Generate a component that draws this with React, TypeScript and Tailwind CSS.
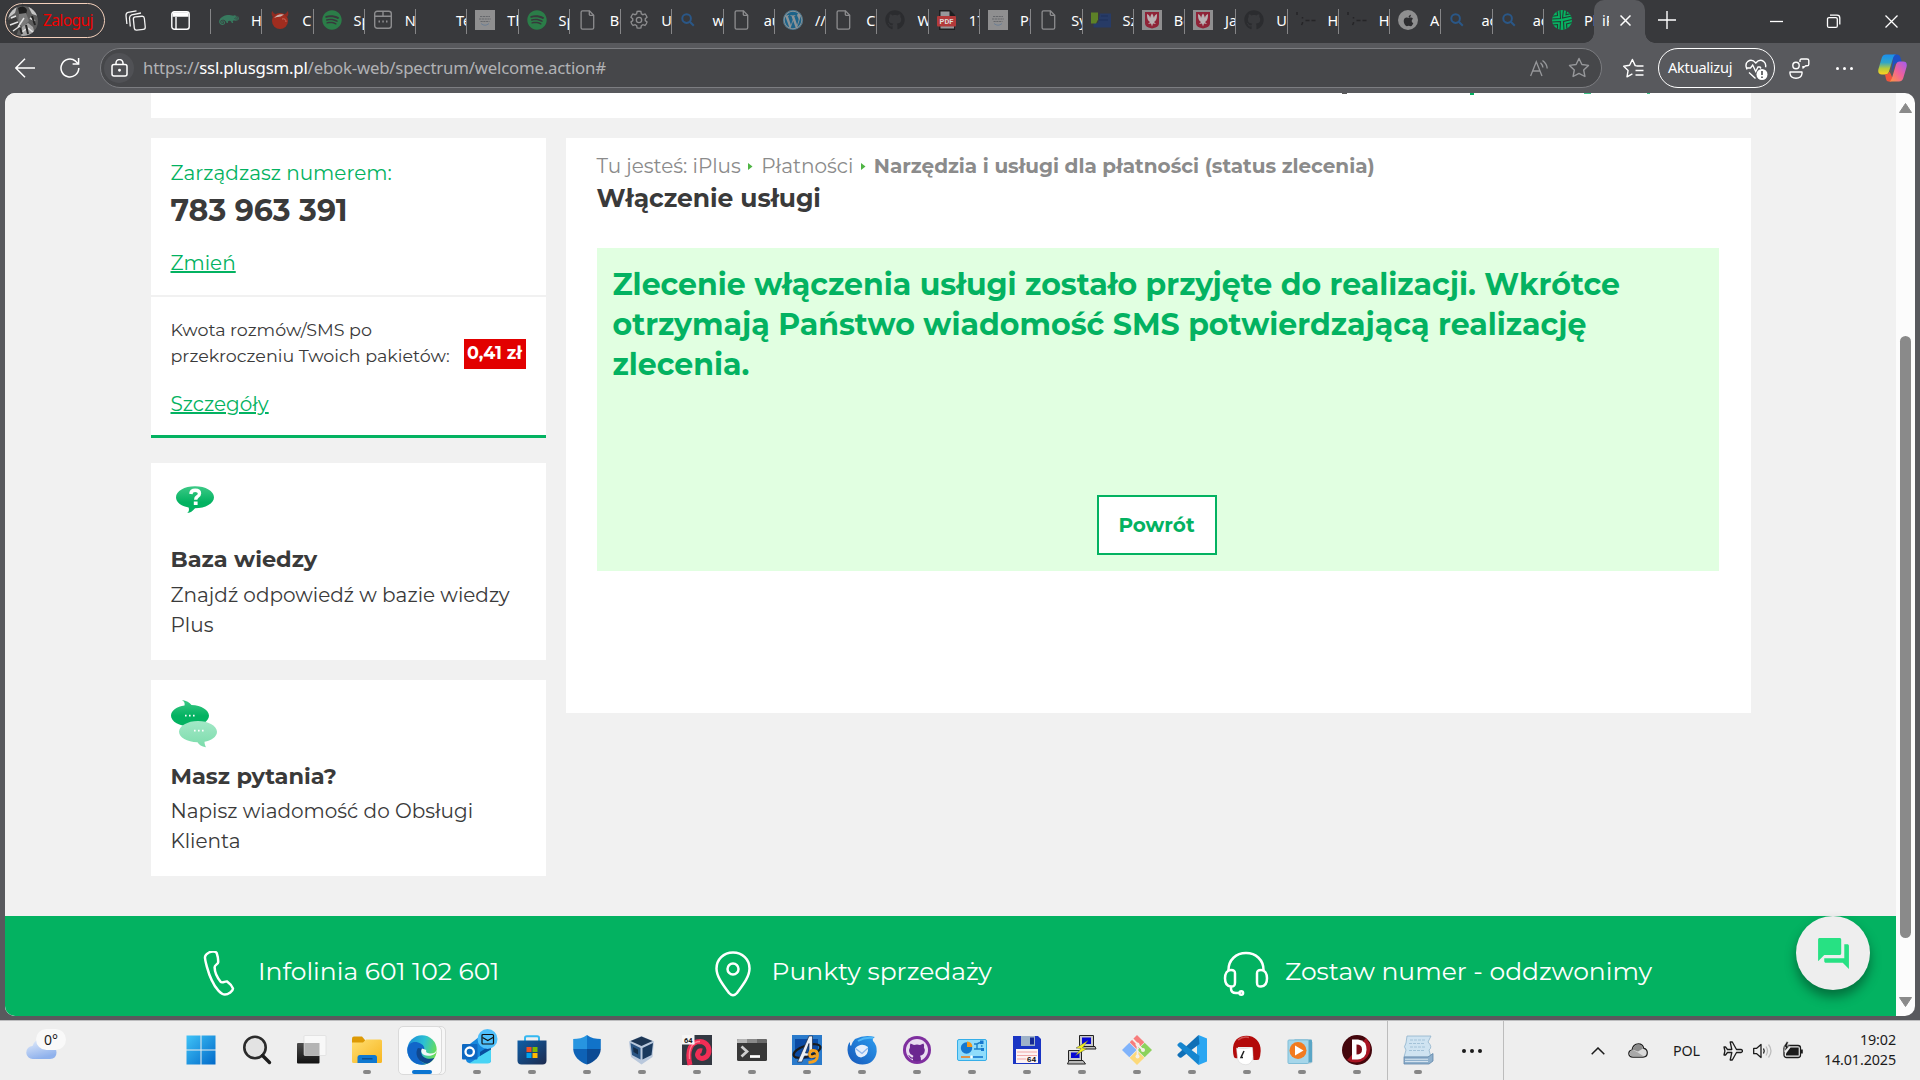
import type { ReactNode } from "react";
import { FaSpotify, FaWordpress, FaGithub, FaApple, FaSuse } from "react-icons/fa";
import { MdForum } from "react-icons/md";

/* ---------- tab icons ---------- */

const FileIcon = () => (
  <svg width="20" height="20" viewBox="0 0 20 20" fill="none" stroke="#8d8d8f" strokeWidth="1.3">
    <path d="M4.5 .8h7l4.2 4.400v12.600a1.400 1.400 0 0 1-1.400 1.400H4.500a1.400 1.400 0 0 1-1.400-1.400V2.200A1.400 1.400 0 0 1 4.500 .8z" />
    <path d="M11.300 .8v3.400a1.200 1.200 0 0 0 1.200 1.200h3.200" />
  </svg>
);

const SearchTabIcon = () => (
  <svg width="20" height="20" viewBox="0 0 20 20" fill="none" stroke="#2a5787" strokeWidth="2">
    <circle cx="6.600" cy="8.600" r="4.300" />
    <path d="m9.800 11.800 4 4" />
  </svg>
);

const WefIcon = () => (
  <svg width="20" height="20" viewBox="0 0 20 20">
    <rect width="20" height="20" fill="#8f8f90" />
    <path d="M5 6.500h10M4 9h12M5.500 11.500h9" stroke="#66686c" strokeWidth="1.200" strokeDasharray="2.200 .6" />
    <path d="M6 13.500q4 3.500 8 0" stroke="#6d7f94" fill="none" />
  </svg>
);

const PolandIcon = () => (
  <svg width="20" height="20" viewBox="0 0 20 20">
    <rect width="20" height="20" fill="#8f8f90" />
    <path d="M3 2h14v11q0 3-3.500 4.500L10 18.500l-3.500-1Q3 16 3 13z" fill="#8f2337" />
    <path d="M5 4c0 5 1 7 3 8l-2 2 3-.5 1 3 1-3 3 .5-2-2c2-1 3-3 3-8-2 1-3 2-3 4L11 5l-1-1.500L9 5l-1 3c0-2-1-3-3-4z" fill="#b9b1b3" />
  </svg>
);

const GearIcon = () => (
  <svg width="20" height="20" viewBox="0 0 24 24" fill="none" stroke="#8d8d8f" strokeWidth="1.600">
    <path d="M12 1.500c.8 0 1.600.1 2.300.3l.5 2.700 1.900 1.100 2.600-.9a10.500 10.500 0 0 1 2.300 4l-2.100 1.800v2.200l2.100 1.800a10.500 10.500 0 0 1-2.300 4l-2.600-.9-1.900 1.100-.5 2.700a10.500 10.500 0 0 1-4.600 0l-.5-2.700-1.900-1.100-2.600.9a10.500 10.500 0 0 1-2.300-4l2.100-1.800v-2.200L2.400 8.700a10.500 10.500 0 0 1 2.300-4l2.600.9 1.900-1.100.5-2.700c.7-.2 1.500-.3 2.300-.3z" />
    <circle cx="12" cy="12" r="3.200" />
  </svg>
);

const WindowTabIcon = () => (
  <svg width="20" height="20" viewBox="0 0 20 20" fill="none" stroke="#8d8d8f" strokeWidth="1.400">
    <rect x="1.700" y="1.200" width="16.600" height="17" rx="2.500" />
    <path d="M2 6.200h8V1.500M10 6.200h8" />
    <path d="M5.500 11.500h1.500M9.300 11.500h1.500M13 11.500h1.500" strokeWidth="1.800" />
  </svg>
);

const DevilIcon = () => (
  <svg width="20" height="20" viewBox="0 0 20 20">
    <circle cx="10" cy="11" r="8" fill="#a02d1f" />
    <path d="M3 7C1 5 1.500 2 2.500 1c.5 2 2 3 4 3.500zM17 7c2-2 1.500-5 .5-6-.5 2-2 3-4 3.500z" fill="#8e2b22" />
    <path d="M4 8q4-5 10-3.500-4 3-7 2.500z" fill="#c9b3ae" />
    <path d="M12 9q4-1 4 3" stroke="#c9685a" fill="none" />
  </svg>
);

const PdfIcon = () => (
  <svg width="20" height="20" viewBox="0 0 20 20">
    <path d="M2 0h11l5 5v15H2z" fill="#1f1f20" />
    <path d="M3.500 1.500h9V6H17v12.500H3.500z" fill="#97979a" />
    <rect y="6" width="19" height="10.500" rx="1" fill="#b33a3a" />
    <text x="9.500" y="14" fontSize="7.500" fontWeight="700" textAnchor="middle" fill="#ddd" fontFamily="Roboto, sans-serif">PDF</text>
  </svg>
);

const BlocksIcon = () => (
  <svg width="20" height="20" viewBox="0 0 20 20">
    <path d="M9 3.500h11v14H2.500V13H7z" fill="#273b66" />
    <path d="M0 2.500h7v7l-2 4H0z" fill="#5d8127" />
    <path d="M10 6h7M8 10h9" stroke="#1f3058" />
  </svg>
);

const PwnedIcon = () => (
  <svg width="20" height="20" viewBox="0 0 20 20" fill="none" stroke="#252527" strokeWidth="1.500">
    <path d="M1 2v3M6.500 7v1.500M6.500 12v1l-1 2M9.500 10.500h4M15.500 10.500h4" />
  </svg>
);

const PlusLogo = () => (
  <svg width="20" height="20" viewBox="0 0 20 20">
    <clipPath id="plusClip"><circle cx="10" cy="10" r="10" /></clipPath>
    <g clipPath="url(#plusClip)">
      <rect width="20" height="20" fill="#07b362" />
      <g stroke="#253a33" strokeWidth="1.100" fill="none">
        <path d="m8 0 .5 8.500L0 9M5 0l.5 5.500L0 6.300M11.500 0l-1 8L20 6M14.500 1 14 4.800l5-1.300M0 12l8.500-.5L8 20M0 15l5.500-.5V19M20 9.500l-8.500 2 .5 8.500M20 12.500l-5.500 1.500.5 6" />
      </g>
    </g>
  </svg>
);

type Tab = { icon?: ReactNode; text: string };

const file = <FileIcon />;
const spotify = <FaSpotify size={20} color="#2b7d48" />;
const github = <FaGithub size={20} color="#2b2c2f" />;

const tabs: Tab[] = [
  { icon: <FaSuse size={20} color="#37795e" />, text: "H" },
  { icon: <DevilIcon />, text: "C" },
  { icon: spotify, text: "Sp" },
  { icon: <WindowTabIcon />, text: "N" },
  { text: "Te" },
  { icon: <WefIcon />, text: "Th" },
  { icon: spotify, text: "Sp" },
  { icon: file, text: "Be" },
  { icon: <GearIcon />, text: "U" },
  { icon: <SearchTabIcon />, text: "w" },
  { icon: file, text: "au" },
  { icon: <span className="size-5 rounded-full bg-[#8d9396]"><FaWordpress size={20} color="#1d6389" /></span>, text: "//" },
  { icon: file, text: "C" },
  { icon: github, text: "W" },
  { icon: <PdfIcon />, text: "17" },
  { icon: <WefIcon />, text: "Pr" },
  { icon: file, text: "Sy" },
  { icon: <BlocksIcon />, text: "Sz" },
  { icon: <PolandIcon />, text: "Be" },
  { icon: <PolandIcon />, text: "Ja" },
  { icon: github, text: "U" },
  { icon: <PwnedIcon />, text: "H" },
  { icon: <PwnedIcon />, text: "H" },
  {
    icon: (
      <span className="flex size-5 items-center justify-center rounded-full bg-[#8f8f90]">
        <FaApple size={13} color="#2d2d30" />
      </span>
    ),
    text: "A",
  },
  { icon: <SearchTabIcon />, text: "ac" },
  { icon: <SearchTabIcon />, text: "ac" },
  { icon: <PlusLogo />, text: "Pl" },
];

/* ---------- browser chrome ---------- */

function TabStrip() {
  return (
    <div className="flex h-[43px] bg-[#38393c] text-white">
      <div className="mt-[3px] ml-[5px] flex h-[35px] w-[100px] shrink-0 items-center rounded-full border-[1.5px] border-[#f3d0bb] pl-[2px]">
        <svg width="30" height="30" viewBox="0 0 30 30">
          <clipPath id="avatar"><circle cx="15" cy="15" r="15" /></clipPath>
          <g clipPath="url(#avatar)">
            <rect width="30" height="30" fill="#5c5c5c" />
            <path d="M0 0h9l-2 7-7 5zM20 0h10v10l-6-2z" fill="#c4c4c4" />
            <path d="M10 2q6-4 9 2l-1 5-6 2z" fill="#1f1f1f" />
            <path d="M11 8l7-1 3 8-6 6-5-4z" fill="#7a7a7a" />
            <path d="M0 14l8-3 4 9-4 10H0z" fill="#3a3a3a" />
            <path d="M14 21l6-4 5 4 3 11H13z" fill="#a5a5a5" />
            <path d="M2 19l8-3M5 25l7-5M16 12l-6 9M20 22l6 5M22 12l5 3M3 12l5-2M14 26l4-3" stroke="#e2e2e2" strokeWidth="1.500" />
            <path d="M18 19l2 9M24 10l3 9M12 22l2 6" stroke="#252525" strokeWidth="2" />
          </g>
        </svg>
        <span className="ml-[5px] font-['Noto_Sans',sans-serif] text-[15.5px] tracking-[-0.6px] text-[#f20000]">Zaloguj</span>
      </div>
      <svg className="mt-[10px] ml-[20px] shrink-0" width="22" height="22" viewBox="0 0 22 22" fill="none" stroke="#f3f3f3" strokeWidth="1.300">
        <rect x="8.800" y="6.600" width="11" height="13.200" rx="2.200" transform="rotate(-6 14 13)" />
        <path d="M5.300 16.500 4.500 8q0-2.500 2.200-3.200L16 3M1.900 14 1 5.500Q.9 3 3.100 2.400L11.500.9" />
      </svg>
      <svg className="mt-[11px] ml-[24px] shrink-0" width="19" height="19" viewBox="0 0 19 19" fill="none" stroke="#fff" strokeWidth="1.400">
        <rect x=".8" y=".8" width="17.400" height="17.400" rx="2.500" />
        <path d="M1.500 3.500h16" strokeWidth="4.500" />
        <path d="M5 6v12" />
      </svg>
      <div className="ml-[20px] flex w-[1384px] shrink-0">
        {tabs.map((t, i) => (
          <div key={i} className="relative flex min-w-0 flex-1 overflow-hidden pt-[10px] pl-[9px]">
            <span className="absolute top-[9px] left-0 h-[25px] w-px bg-[#858587]" />
            <span className="flex size-5 shrink-0">{t.icon}</span>
            <span className="ml-[12px] font-['Noto_Sans',sans-serif] text-[14.500px] leading-[20px] whitespace-nowrap">{t.text}</span>
          </div>
        ))}
      </div>
      <div className="relative flex h-[43px] w-[51px] shrink-0 rounded-t-[10px] bg-[#58595d] pt-[10px] pl-[8px]">
        <span className="absolute bottom-0 -left-[10px] size-[10px] bg-[radial-gradient(circle_at_0_0,#38393c_9.5px,#58595d_10px)]" />
        <span className="absolute -right-[10px] bottom-0 size-[10px] bg-[radial-gradient(circle_at_100%_0,#38393c_9.5px,#58595d_10px)]" />
        <span className="w-[7px] overflow-hidden font-['Noto_Sans',sans-serif] text-[14.500px] leading-[20px]">iP</span>
        <svg className="mt-[5px] ml-[11px]" width="11" height="11" viewBox="0 0 11 11" stroke="#fff" strokeWidth="1.500">
          <path d="m.5.5 10 10M10.500.5l-10 10" />
        </svg>
      </div>
      <svg className="mt-[11px] ml-[13px] shrink-0" width="18" height="18" viewBox="0 0 18 18" stroke="#fff" strokeWidth="1.400">
        <path d="M9 0v18M0 9h18" />
      </svg>
      <svg className="mt-[14px] ml-[94px] shrink-0" width="130" height="15" viewBox="0 0 130 15" fill="none" stroke="#fff" strokeWidth="1.300">
        <path d="M0 7.500h13" />
        <rect x="57.500" y="3.600" width="9.800" height="9.800" rx="1.500" />
        <path d="M60 1.200h7q2.800 0 2.800 2.800v6.600" />
        <path d="m115.500 1.500 12 12M127.500 1.500l-12 12" />
      </svg>
    </div>
  );
}

function Toolbar() {
  return (
    <div className="flex h-[50px] items-center bg-[#58595d] text-white">
      <svg className="ml-[15px] shrink-0" width="20" height="20" viewBox="0 0 20 20" fill="none" stroke="#fff" strokeWidth="1.500">
        <path d="M20 10H1M10 .8.8 10l9.200 9.200" />
      </svg>
      <svg className="ml-[25px] shrink-0" width="20" height="20" viewBox="0 0 20 20" fill="none" stroke="#fff" strokeWidth="1.500">
        <path d="M18.800 10A8.900 8.900 0 1 1 15.600 3.200L18.500 6" />
        <path d="M18.600 0v6h-6" />
      </svg>
      <div className="ml-[20px] flex h-[40px] w-[1502px] items-center rounded-full border-[1.5px] border-[#7c7d81] bg-[#46474a] pl-[3px]">
        <span className="flex size-[30px] shrink-0 items-center justify-center rounded-full bg-[#505155]">
          <svg width="17" height="18" viewBox="0 0 17 18" fill="none" stroke="#fff" strokeWidth="1.500">
            <rect x="1" y="5.500" width="15" height="11.500" rx="2" />
            <path d="M5 5.500V4a3.500 3.500 0 0 1 7 0v1.500" />
            <circle cx="8.500" cy="11.200" r=".7" fill="#fff" />
          </svg>
        </span>
        <span className="ml-[9px] pb-px font-['Noto_Sans',sans-serif] text-[16.800px] tracking-[-0.2px] whitespace-nowrap text-[#b1b2b5]">
          https://<span className="text-white">ssl.plusgsm.pl</span>/ebok-web/spectrum/welcome.action#
        </span>
        <svg className="ml-auto shrink-0" width="19" height="18" viewBox="0 0 19 18" fill="none" stroke="#97989b" strokeWidth="1.300">
          <path d="M.6 17 6.300 2.800 12 17M2.700 12h7.300" />
          <path d="M10.500 3.800q2 1.800 2.400 4.700M12.500 1.500q4.500 3.300 4.700 8" />
        </svg>
        <svg className="mr-[11px] ml-[19px] shrink-0" width="22" height="22" viewBox="0 0 22 22" fill="none" stroke="#97989b" strokeWidth="1.400" strokeLinejoin="round">
          <path d="m11 1.500 2.900 6 6.600.9-4.800 4.600 1.200 6.500L11 16.400l-5.900 3.100L6.300 13 1.500 8.400l6.600-.9z" />
        </svg>
      </div>
      <svg className="ml-[21px] shrink-0" width="22" height="21" viewBox="0 0 22 21" fill="none" stroke="#fff" strokeWidth="1.400" strokeLinejoin="round">
        <path d="M20.500 8h-6l-2.300-.4L9.400 1.500 6.600 7.300l-5.900.9 4.400 4.200L4 18.800l5.400-3" />
        <path d="M12.500 12.500h8M12.500 17h8" />
      </svg>
      <div className="ml-[13px] flex h-[40px] w-[117px] shrink-0 items-center rounded-full border-[1.5px] border-white pl-[9px]">
        <span className="pb-px font-['Noto_Sans',sans-serif] text-[14.600px] tracking-[-0.25px]">Aktualizuj</span>
        <svg className="mt-[3px] mr-[6px] ml-auto" width="23" height="22" viewBox="0 0 23 22" fill="none" stroke="#fff" strokeWidth="1.400">
          <path d="M2 10.500Q-.5 5 3 2.300 7-.3 10.800 4 14.500-.3 18.500 2.300q3 2.500 2 6M4 13.500l6.500 6" />
          <path d="M1 9h4.500l2.200-3 3 6.500L13 8h2l1 1.500" />
          <circle cx="17" cy="15.500" r="5.500" fill="#fff" stroke="none" />
          <path d="M17 12v4M17 17.500v1.500" stroke="#3f4044" strokeWidth="1.500" />
        </svg>
      </div>
      <svg className="ml-[14px] shrink-0" width="21" height="21" viewBox="0 0 21 21" fill="none" stroke="#fff" strokeWidth="1.400">
        <circle cx="7" cy="7.500" r="3.200" />
        <path d="M1 14h12v1.500q-.5 4.700-6 4.700t-6-4.700z" strokeLinejoin="round" />
        <path d="M11 4V2.500q0-1.500 1.500-1.500H18q1.800 0 1.800 1.500v3.700q0 1.600-1.800 1.600h-1.300L14 10V8" strokeLinejoin="round" />
      </svg>
      <span className="ml-[26px] flex gap-[4px]">
        <i className="size-[3px] rounded-full bg-white" />
        <i className="size-[3px] rounded-full bg-white" />
        <i className="size-[3px] rounded-full bg-white" />
      </span>
      <svg className="ml-[25px] shrink-0" width="29" height="28" viewBox="0 0 29 28">
        <defs>
          <linearGradient id="copA" x1="0" y1="0" x2="0" y2="1"><stop offset="0" stopColor="#1a8fee" /><stop offset=".4" stopColor="#2fa5c9" /><stop offset=".7" stopColor="#b6cb3b" /><stop offset="1" stopColor="#ffd21f" /></linearGradient>
          <linearGradient id="copB" x1="1" y1="0" x2="0" y2="1"><stop offset="0" stopColor="#a05cf2" /><stop offset=".5" stopColor="#f0619a" /><stop offset="1" stopColor="#ff9a3c" /></linearGradient>
        </defs>
        <path d="M15 .5h4.500q2 0 2.800 2.500l1.700 6h-5q-2 0-2.800 2L14 18" fill="#1d50c4" />
        <path d="M8 .5h10q-2 .5-2.800 3L11 17.500q-1 3-3.500 3H4Q-1 20.500.6 14.500L3.800 3.800Q5 .5 8 .5z" fill="url(#copA)" />
        <path d="M7 20.500q3.500 0 4.500-3l1.500 3 2 5-2 2h-2.500Q8.500 27.500 8 25z" fill="#f0553c" />
        <path d="M21 27.500H11q2-.5 2.800-3L18 10.500q1-3 3.500-3H25q5 0 3.400 6l-3.200 10.700Q24 27.500 21 27.500z" fill="url(#copB)" />
      </svg>
    </div>
  );
}

/* ---------- page content ---------- */

const Link = ({ children }: { children: string }) => (
  <a className="text-[#03b261] underline decoration-2 underline-offset-[1px]">{children}</a>
);

function InfoCard({ icon, title, text, gap, textGap }: { icon: ReactNode; title: string; text: ReactNode; gap: string; textGap: string }) {
  return (
    <section className={"w-[395px] bg-white px-5 pt-5 pb-5 " + gap}>
      <div className="h-12">{icon}</div>
      <h2 className="mt-[13px] text-[22.500px] leading-[30px] font-bold text-[#3a3a3a]">{title}</h2>
      <p className={"text-[20px] leading-[30px] text-[#3a3a3a] " + textGap}>{text}</p>
    </section>
  );
}

function Sidebar() {
  return (
    <aside className="w-[395px]">
      <section className="border-b-[3px] border-[#03b261] bg-white">
        <div className="border-b-2 border-[#f1f1f1] px-5 pt-5 pb-[17px] text-[20px]">
          <p className="leading-[30px] text-[#03b261]">Zarządzasz numerem:</p>
          <p className="mt-px text-[30px] leading-[44px] font-bold text-[#3a3a3a]">783 963 391</p>
          <p className="mt-[15px] leading-[30px]"><Link>Zmień</Link></p>
        </div>
        <div className="px-5 pt-5 pb-4 text-[20px]">
          <div className="flex items-end justify-between text-[17.500px] leading-[26px] text-[#3a3a3a]">
            <p>Kwota rozmów/SMS po<br />przekroczeniu Twoich pakietów:</p>
            <span className="h-[30px] w-[62px] bg-[#e20000] text-center leading-[27px] font-bold whitespace-nowrap text-white">0,41 zł</span>
          </div>
          <p className="mt-5 leading-[30px]"><Link>Szczegóły</Link></p>
        </div>
      </section>
      <InfoCard
        gap="mt-[25px]"
        textGap="mt-[6px]"
        title="Baza wiedzy"
        text={<>Znajdź odpowiedź w bazie wiedzy<br />Plus</>}
        icon={
          <svg width="48" height="48" viewBox="0 0 48 48">
            <defs><linearGradient id="bubble" x1="0" y1="0" x2="0" y2="1"><stop offset="0" stopColor="#3cc986" /><stop offset=".6" stopColor="#03b261" /></linearGradient></defs>
            <path d="M24 3.300c10.500 0 19 4.900 19 10.900 0 6.100-8.500 11-19 11-2.300 2.600-3.800 4.200-7.800 4.800 1.900-1.300 2.100-3.500 1.400-5.500C10 23 5 19 5 14.200 5 8.200 13.500 3.300 24 3.300z" fill="url(#bubble)" />
            <path d="M19.800 11q.3-3.800 4.400-3.800 4.300 0 4.300 3.300 0 2-2.200 3.200-1.600 1-1.600 3" fill="none" stroke="#fff" strokeWidth="3.400" />
            <path d="M22.800 18.500h3.800v3.500h-3.800z" fill="#fff" />
          </svg>
        }
      />
      <InfoCard
        gap="mt-5"
        textGap="mt-[5px]"
        title="Masz pytania?"
        text={<>Napisz wiadomość do Obsługi<br />Klienta</>}
        icon={
          <svg width="48" height="48" viewBox="0 0 48 48">
            <defs><linearGradient id="bubblePale" x1="0" y1="0" x2="0" y2="1"><stop offset="0" stopColor="#a3e8c7" /><stop offset="1" stopColor="#7bdcab" /></linearGradient></defs>
            <path d="M19 26.500C8.500 26.500 0 21.500 0 15.800 0 10.500 6 6.500 13.500 5.500 14 3.500 13.500 1.500 11 0c4.500.5 7.500 2.500 9.500 5C30.500 5.500 38 10 38 15.800c0 5.700-8.500 10.700-19 10.700z" fill="url(#bubble)" />
            <path d="M27 21c10.500 0 19 5 19 10.800 0 5.200-6 9-12.500 10 0 2 .5 3.700 1.500 5.500-4.500-.5-7-2.500-8.500-5C16 42 8 37.500 8 31.800 8 26 16.500 21 27 21z" fill="url(#bubblePale)" />
            <path d="M14 15.700h1.600M18 15.700h1.600M22 15.700h1.600M23 30.700h1.600M27 30.700h1.600M31 30.700h1.600" stroke="#fff" strokeWidth="1.700" />
          </svg>
        }
      />
    </aside>
  );
}

const Caret = () => (
  <svg className="mr-[8px] ml-[7.500px]" width="5" height="7" viewBox="0 0 5 7"><path d="M0 0 4.500 3.500 0 7z" fill="#4fb544" /></svg>
);

function Main() {
  return (
    <main className="h-[575px] w-[1185px] bg-white pt-[13px] pr-8 pl-[31px]">
      <nav className="flex items-center text-[20px] leading-[30px] tracking-[-0.02px] whitespace-nowrap text-[#8b8b8b]">
        <span>Tu jesteś: iPlus</span>
        <Caret />
        <span>Płatności</span>
        <Caret />
        <span className="font-bold">Narzędzia i usługi dla płatności (status zlecenia)</span>
      </nav>
      <h1 className="text-[25px] leading-[34px] font-bold tracking-[-0.05px] text-[#3a3a3a]">Włączenie usługi</h1>
      <div className="mt-[33px] h-[323px] bg-[#e1ffe1] px-4 pt-[17px] text-[#03b261]">
        <p className="text-[30px] leading-[40px] font-bold tracking-[-0.01px] whitespace-nowrap">
          Zlecenie włączenia usługi zostało przyjęte do realizacji. Wkrótce
          <br />
          otrzymają Państwo wiadomość SMS potwierdzającą realizację
          <br />
          zlecenia.
        </p>
        <button className="mt-[110px] ml-[484px] block h-[60px] w-[120px] border-2 border-[#03b261] bg-white text-[20px] font-bold">Powrót</button>
      </div>
    </main>
  );
}

const contacts: { label: string; icon: ReactNode }[] = [
  {
    label: "Infolinia 601 102 601",
    icon: (
      <path d="M14 1.500c3-1.500 7-1.200 7.800.8 1 3 1.600 6.500 1.300 9.300-.2 1.500-3.600 2.400-3.500 4.700.1 5 2.800 10.500 6 14.500 1.500 1.800 5-1 6.500-.3 2.700 2 5 4.500 5.800 6.800.7 2.500-5 6.300-8 6.300-3.500 0-9.500-6-13-14C13 22 9.800 8.500 10 6c.2-2 2-3.500 4-4.500z" />
    ),
  },
  {
    label: "Punkty sprzedaży",
    icon: (
      <>
        <path d="M24 1.500c9.500 0 16.500 7 16.500 16 0 8.500-7 17-12.500 24.500q-4 4.500-8 0C14.500 34.500 7.500 26 7.500 17.500c0-9 7-16 16.500-16z" />
        <circle cx="24" cy="18" r="5.500" />
      </>
    ),
  },
  {
    label: "Zostaw numer - oddzwonimy",
    icon: (
      <>
        <path d="M6.500 19.500V19C6.500 9 14 2 24 2s17.500 7 17.500 17v.5" />
        <path d="M9 19c3.500 0 4 1 4 3.500v9c0 3.500-1 4-4 4-4 0-6-3.500-6-8.200S5 19 9 19zM39 19c-3.500 0-4 1-4 3.500v9c0 3.500 1 4 4 4 4 0 6-3.500 6-8.200S43 19 39 19z" />
        <path d="M9 36v1.500q0 4.500 5 4.500h3" />
        <circle cx="19.300" cy="42" r="1.800" />
      </>
    ),
  },
];

function Footer() {
  return (
    <footer className="h-[100px] shrink-0 bg-[#03b261] pt-[35px] pl-[190px]">
      <div className="grid grid-cols-[513.5px_513.5px_1fr]">
        {contacts.map((c) => (
          <div key={c.label} className="flex">
            <svg width="48" height="48" viewBox="0 0 48 48" fill="none" stroke="#fff" strokeWidth="2.500">{c.icon}</svg>
            <span className="ml-[15px] text-[25px] leading-[40px] whitespace-nowrap text-white">{c.label}</span>
          </div>
        ))}
      </div>
    </footer>
  );
}

function Page() {
  return (
    <div className="flex h-[927px] bg-[#58595d] px-[5px] pb-[4px]">
      <div className="relative flex h-[923px] w-[1910px] overflow-hidden rounded-[10px] bg-[#fcfcfc] font-['Montserrat','Inter',sans-serif]">
        <div className="flex w-[1891px] flex-col bg-[#f1f1f1]">
          <div className="mx-auto flex h-[25px] w-[1600px] shrink-0 bg-white">
            <i className="ml-[1191px] h-px w-[5px] bg-[#5a5a5a]" />
            <i className="ml-[123px] h-[1.500px] w-[4px] bg-[#03b261]" />
            <i className="ml-[110px] h-px w-[7px] bg-[#3fc388]" />
            <i className="ml-[56px] h-px w-[3px] bg-[#3fc388]" />
          </div>
          <div className="mx-auto mt-5 flex w-[1600px] flex-1 items-start gap-5">
            <Sidebar />
            <Main />
          </div>
          <Footer />
        </div>
        <div className="flex w-[19px] flex-col items-center pt-[10px]">
          <svg width="13" height="10" viewBox="0 0 13 10"><path d="M6.500.5 12.500 9.500H.5z" fill="#8a8a8a" stroke="#8a8a8a" strokeLinejoin="round" /></svg>
          <div className="mt-[223px] h-[602px] w-[11px] rounded-full bg-[#8a8a8a]" />
          <svg className="mt-[59px]" width="13" height="10" viewBox="0 0 13 10"><path d="M6.500 9.500.5.5h12z" fill="#8a8a8a" stroke="#8a8a8a" strokeLinejoin="round" /></svg>
        </div>
        <button className="absolute top-[823px] left-[1791px] flex size-[74px] items-center justify-center rounded-full bg-[#eeeeee] shadow-[0_7px_12px_rgba(0,0,0,0.38)]">
          <MdForum size={37} color="#27e183" />
        </button>
      </div>
    </div>
  );
}

/* ---------- taskbar ---------- */

const apps: { name: string; icon: ReactNode; still?: boolean; active?: boolean }[] = [
  {
    name: "start", still: true,
    icon: <><path d="M-.5.5h14v14h-14zM14.500.5h14v14h-14zM-.5 15.500h14v14h-14zM14.500 15.500h14v14h-14z" fill="url(#win)" /></>,
  },
  {
    name: "search", still: true,
    icon: <><circle cx="13" cy="12.500" r="10.700" fill="#e3e3e3" stroke="#2b2b2b" strokeWidth="2.600" /><path d="m20.500 20.500 7 7" stroke="#1d1d1d" strokeWidth="3.400" strokeLinecap="round" /></>,
  },
  {
    name: "tasks", still: true,
    icon: <><rect x="0" y="8" width="22.500" height="20.500" rx="1" fill="url(#dark)" /><rect x="7" y=".5" width="22" height="20" rx="1" fill="#f8f8f8" stroke="#d9d9d9" strokeWidth=".6" /><path d="M7.300 8h15.200v12.200H7.300z" fill="#b4b4b4" /></>,
  },
  {
    name: "explorer",
    icon: <><path d="M0 3.500q0-2 2-2h8l3 3.500v5H0z" fill="#dd9a05" /><path d="M0 7.500h11l3-3h14.500q1.500 0 1.500 1.500v20.500q0 1.500-1.500 1.500h-27Q0 28 0 26.500z" fill="url(#folder)" /><path d="M5.500 28v-5.500q0-2.500 2.500-2.500h14.500q2.500 0 2.500 2.500V28z" fill="#0f78d0" /><path d="M10 23.800h10.500" stroke="#0b4a8a" strokeWidth="1.300" /></>,
  },
  {
    name: "edge", active: true,
    icon: <><circle cx="15" cy="15" r="14.700" fill="url(#edgeA)" /><path d="M.3 14.500C1 8 6.500 6 11 7.500c6 2 7 5 6 8-4-1.500-7.500 2-5.500 7 1.500 4 5 6.500 8.500 6.300A14.700 14.700 0 0 1 .3 14.500z" fill="#1166c9" /><path d="M11 13c-3 4-2 13.500 9 15.800 3.500-1 6-3.500 7.500-6-5 2-11.500 1-13-4-.7-2.500 0-4 1.500-5z" fill="#10488f" /><path d="M15 13.500c-2 3 0 7 6 7.300 5 .2 9-2.300 8.700-6.300-.5 2.500-3 4.500-7 4-3-.3-4.200-1.500-3.500-3.500" fill="#f4f8f9" /></>,
  },
  {
    name: "outlook",
    icon: <><path d="M4 12 17 2l12 9v14q0 3-3 3H8q-4 0-4-4z" fill="#1587dd" /><path d="m11 26 18-13v12q0 3.500-3.500 3.500H7z" fill="#49d4f5" /><path d="m18 17 11-7v4.500L18 21z" fill="#08509f" /><rect x="0" y="9" width="15.500" height="15.500" rx="1" fill="#0d68c2" /><circle cx="7.700" cy="16.700" r="4.200" fill="none" stroke="#fff" strokeWidth="2.300" /><circle cx="25.500" cy="4" r="10" fill="#4fc0fb" /><rect x="20" y="-.5" width="11.500" height="9.500" rx="1" fill="none" stroke="#111" strokeWidth="1.200" /><path d="m20.500 2.500 5.300 3 5.200-3" fill="none" stroke="#111" strokeWidth="1.100" /></>,
  },
  {
    name: "store",
    icon: <><path d="M8 6V3q0-1.800 1.800-1.800h10.400Q22 1.200 22 3v3" fill="none" stroke="#35b8f1" strokeWidth="2" /><path d="M.5 5.500h29v20q0 4-4 4h-21q-4 0-4-4z" fill="url(#store)" /><path d="M9.500 12h5v5h-5z" fill="#f25022" /><path d="M15.500 12h5v5h-5z" fill="#7fba00" /><path d="M9.500 18h5v5h-5z" fill="#00a4ef" /><path d="M15.500 18h5v5h-5z" fill="#ffb900" /></>,
  },
  {
    name: "defender",
    icon: <><path d="M15 0C11 3 6 4 1.200 4v10H15z" fill="#2795e0" /><path d="M15 0c4 3 9 4 13.800 4v10H15z" fill="#1173c9" /><path d="M1.200 14C1.500 21 7 27 15 29.500V14z" fill="#0e62b6" /><path d="M28.800 14C28.500 21 23 27 15 29.500V14z" fill="#0b4a94" /></>,
  },
  {
    name: "virtualbox",
    icon: <><path d="M14.500 1 27 6.500 25.500 22l-11 7.500L4 22 2 6.500z" fill="#b9c8dc" /><path d="M14.500 1.500 25.500 6l-11 5L3.500 6z" fill="#1d3654" /><path d="m3.500 8 10 5v11.500L5 20z" fill="#2a5584" /><path d="m6 12 5 2.500v5L6.500 17z" fill="#132c49" /><path d="m26 8-10.500 5v11.500l9-4.500z" fill="#1b3a5e" /></>,
  },
  {
    name: "debian",
    icon: <><path d="M0 0h30v30H0z" fill="#333842" /><path d="M8 30C4.500 15 9 6.500 18 6.500c8 .5 10 7.500 8.500 12-1.500 4.500-6.500 6-9.500 4-3-3-.5-7.500 3-6.500" fill="none" stroke="#f12d55" strokeWidth="5" /><path d="M7.500 24C6.500 14 10 6.500 18 6.500" fill="none" stroke="#ff7d93" strokeWidth="1.300" /><path d="M0 0h12.500v9.500H0z" fill="#f5f5f5" /><text x="6.200" y="7.500" fontSize="7.500" fontWeight="700" textAnchor="middle" fill="#222" fontFamily="Roboto, sans-serif">64</text></>,
  },
  {
    name: "terminal",
    icon: <><rect y="4" width="30" height="22" rx="1.500" fill="#383838" /><path d="M0 8V5.500Q0 4 1.500 4H10v4z" fill="#b5b5b5" /><path d="M10 4h10v4H10z" fill="#8a8a8a" /><path d="M20 4h8.500Q30 4 30 5.500V8H20z" fill="#6a6a6a" /><path d="m4.500 11.500 5.500 5-5.500 5" fill="none" stroke="#cfcfcf" strokeWidth="2.700" /><path d="M13 21.500h10" stroke="#fff" strokeWidth="2.700" /></>,
  },
  {
    name: "a9",
    icon: <><path d="M0 0h30v30H0z" fill="#2a7acb" /><path d="M3 4h23v20H3z" fill="#0b4aa3" /><ellipse cx="15" cy="16" rx="14" ry="5.500" fill="none" stroke="#1b1b1b" strokeWidth="2.200" transform="rotate(-18 15 16)" /><path d="M17 1 5.500 27H10l2.500-6H16l.5-3h-3L17 8.500V18h3.500V1z" fill="#eceff5" stroke="#18294a" strokeWidth=".7" /><path d="M24 20.500q-6 3-6.500-1 0-4 4-4t4 5q0 6.500-9 7" fill="none" stroke="#f5a11f" strokeWidth="2.800" /></>,
  },
  {
    name: "thunderbird",
    icon: <><path d="M8 4Q18-1 28 2q-3 1.500-2 4 4 4 3.700 10.500C29 25 23 29.500 15.500 29.500 7 29.500 1 24 .5 15q0-6 2.500-8-.5 3 1 4Q5 7 8 4z" fill="url(#tbird)" /><path d="M8 13.500Q14 7 21 12q1 9-7 10.500-6-.5-6-9z" fill="#e6effc" /><path d="m8.500 13.500 6.500 5 6-5.500" fill="none" stroke="#8bb4ec" strokeWidth="1.300" /><path d="M11 6q7-4 15-3" stroke="#4fb7f7" strokeWidth="2" fill="none" /></>,
  },
  {
    name: "github",
    icon: <><circle cx="15" cy="15" r="14" fill="#7f2f9f" /><circle cx="15" cy="15" r="11" fill="#e9dcf0" /><path d="M8.500 8.500 12 10q3-1 6 0l3.500-1.500q1 2 .4 3.700 1.300 2.200.6 4.800-1 3.300-4.500 3.800 1 1 1 5-4 1.500-8 0v-2q-3 .5-4-2.500l-1-1q2-.3 3 2l2 .3.300-1.800Q8 20 7.300 17q-.6-2.600.7-4.800-.5-1.700.5-3.700z" fill="#6b2790" /></>,
  },
  {
    name: "control panel",
    icon: <><rect x=".5" y="4.500" width="29" height="21" rx="1.500" fill="#8fdcfb" stroke="#36aee8" /><circle cx="9.500" cy="13" r="5.700" fill="#1677cf" /><path d="M10 12V6.500a6 6 0 0 1 5.500 5.500z" fill="#f49a1d" /><path d="M17 9h3l3-1.500M17 14h8M20 9v5M24 11h1.500" stroke="#1b7fc6" strokeWidth="1.400" fill="none" /><path d="M23 5.500h3.500V9H23zM24 13h3v3h-3z" fill="#1677cf" /><path d="M4 22h9" stroke="#f07f1d" strokeWidth="1.600" /><path d="M16 22h10" stroke="#1677cf" strokeWidth="1.600" /><path d="M13.500 20.500h2v3h-2z" fill="#fff" /></>,
  },
  {
    name: "floppy",
    icon: <><path d="M1 1h25l3 3v25H1z" fill="#1a35c4" /><path d="M9 1h14v10H9z" fill="#9eb2c9" /><path d="M18 2.500h4v7h-4z" fill="#152a94" /><path d="M4 14h22v14H4z" fill="#fdf3f3" /><path d="M5 17h20M5 20.500h20M5 24h9" stroke="#efa7a7" strokeWidth="1.200" /><text x="19.500" y="26.500" fontSize="8" fontWeight="700" textAnchor="middle" fill="#111" fontFamily="Liberation Mono, monospace">64</text></>,
  },
  {
    name: "putty",
    icon: <><path d="M12.500.5h14v11h-14zM1.500 15.500h13v10h-13z" fill="#c9c9c9" stroke="#222" /><path d="M15 2.500h9v6.500h-9zM4 17.500h8.500V23H4z" fill="#0707d4" /><path d="M16 11.500h12l1 2.500H15zM2 25.500h14l2.500 3.500H.5z" fill="#bababa" stroke="#222" /><path d="M21 5.500 9 13l5 .5-5.500 7L20 13.500l-4.500-.5z" fill="#f4f11c" stroke="#555" strokeWidth=".5" /></>,
  },
  {
    name: "git",
    icon: <><path d="m15 0 7.300 7.300-7.300 7.300-7.300-7.300z" fill="#f77c7c" /><path d="m22.700 7.700 7.300 7.300-7.300 7.300-7.300-7.300z" fill="#8bd25c" /><path d="m7.300 7.700 7.300 7.300-7.300 7.300L0 15z" fill="#80b3fb" /><path d="m15 15.400 7.300 7.300L15 30l-7.300-7.300z" fill="#fcd97a" /><path d="m10.500 4 5 5v13M16 10l5 5" fill="none" stroke="#f3efe9" strokeWidth="1.800" /><circle cx="15.500" cy="9.500" r="2" fill="#f3efe9" /><circle cx="15.500" cy="21.500" r="2" fill="#f3efe9" /><circle cx="21" cy="15" r="2" fill="#f3efe9" /></>,
  },
  {
    name: "vscode",
    icon: <><path d="M21.500 0 30 3.500v23L21.500 30l-1.500-8V8z" fill="#2aa6f2" /><path d="M21.500 0 .8 19q-1 1 0 2l1.700 1.500q1 .6 2 0L22.500 9z" fill="#0f6fb6" /><path d="M21.500 30 .8 11q-1-1 0-2l1.700-1.500q1-.6 2 0L22.500 21z" fill="#1585cf" /></>,
  },
  {
    name: "redhead",
    icon: <><path d="M1 16C.5 6 6 .8 14.500.8S29 7 28.700 16q-.2 5-1.700 8.500-3 .8-5.500.5L20 12H6v11q-3 1-4-1Q1 19 1 16z" fill="#b30a0a" /><path d="M4.500 13q8 1.500 16-.5l.5 9q-.5 7.500-7 8.300-7-.3-8.500-6.300z" fill="#fff" stroke="#d0d0d0" strokeWidth=".5" /><path d="M6 5q5-4 11-2.500" stroke="#cf5050" strokeWidth="1.500" fill="none" /><path d="m12 16-3 6.500h2" fill="none" stroke="#222" strokeWidth="1.500" /></>,
  },
  {
    name: "media player",
    icon: <><path d="M10 6.500 26 7v20l-3 2H8z" fill="#b9c9d4" opacity=".6" /><rect x="7" y="4.500" width="18" height="23" rx="1" fill="#5aa6c6" /><rect x="1" y="5" width="20.500" height="23.500" rx="1" fill="#a5d6ea" stroke="#7fbdd7" /><circle cx="11" cy="15.500" r="8.500" fill="#f27b20" /><path d="m8 10.500 8.500 5-8.500 5z" fill="#fff" /></>,
  },
  {
    name: "dbeaver",
    icon: <><circle cx="15" cy="15" r="15" fill="#43060c" /><path d="M5 25A15 15 0 0 0 28 9L24 3 8 22z" fill="#a81422" /><path d="M10 4.500h6q8.500 1 8.500 10t-9 10H10z" fill="#fff" /><path d="M14.500 9.500q5.500 0 5.500 5t-5.500 5z" fill="#7c0c18" /></>,
  },
];

const scroll = (
  <>
    <path d="M4 1h24l-3 6q5 5 1 8l2 7H1l2-7q-3-3 0-7z" fill="#cfe3f1" stroke="#8fb2cc" strokeWidth=".8" />
    <path d="M7 5h15M6 8.500h15M7 12h15M6 15.500h15" stroke="#a3c2d8" strokeDasharray="3 1" />
    <path d="M1 22h24l5-3.500V26l-4 3H1z" fill="#8fb0cc" stroke="#5f86a9" strokeWidth=".8" />
    <path d="M2 24.300h23M2 26.500h23" stroke="#dbe8f2" strokeWidth=".9" />
  </>
);

function AppIcon({ children, dot }: { children: ReactNode; dot: string }) {
  return (
    <div className="relative flex w-[30px] shrink-0 flex-col items-center">
      <svg className="mt-[14px] overflow-visible" width="30" height="30" viewBox="0 0 30 30">{children}</svg>
      <span className={"mt-[5px] h-[4px] rounded-full " + dot} />
    </div>
  );
}

function Taskbar() {
  return (
    <div className="flex h-[60px] border-t border-[#bdbdbf] bg-[#eeeeee] text-[#1b1b1b]">
      <div className="relative w-[187px] shrink-0 pt-[17px] pl-[26px]">
        <svg width="31" height="22" viewBox="0 0 31 22">
          <defs><linearGradient id="cloud" x1="0" y1="0" x2=".4" y2="1"><stop offset="0" stopColor="#e8f0fc" /><stop offset="1" stopColor="#8fb1ec" /></linearGradient></defs>
          <path d="M7 21a6.500 6.500 0 0 1-.5-13Q9 1 15.500 1 22 1 24 8q6.500.5 6.500 6.500T24 21z" fill="url(#cloud)" />
        </svg>
        <span className="absolute top-[8px] left-[36px] flex h-[21px] w-[30px] items-center justify-center rounded-full bg-[#f9f9f9] font-['Noto_Sans',sans-serif] text-[14px]">0°</span>
      </div>
      <svg className="absolute size-0">
        <defs>
          <linearGradient id="win" x1="0" y1="0" x2="1" y2="1"><stop offset="0" stopColor="#3fc3f7" /><stop offset="1" stopColor="#0169c9" /></linearGradient>
          <linearGradient id="dark" x1="0" y1="0" x2="0" y2="1"><stop offset="0" stopColor="#4c4c4c" /><stop offset="1" stopColor="#111" /></linearGradient>
          <linearGradient id="folder" x1="0" y1="0" x2="1" y2="1"><stop offset="0" stopColor="#ffdf72" /><stop offset="1" stopColor="#f7b51f" /></linearGradient>
          <linearGradient id="edgeA" x1="0" y1=".3" x2="1" y2=".6"><stop offset="0" stopColor="#1d8fd8" /><stop offset=".5" stopColor="#2cc0d4" /><stop offset="1" stopColor="#6ce04f" /></linearGradient>
          <linearGradient id="store" x1="0" y1="0" x2="1" y2="1"><stop offset="0" stopColor="#0f5ea6" /><stop offset="1" stopColor="#1d2b4f" /></linearGradient>
          <linearGradient id="tbird" x1="1" y1="0" x2="0" y2="1"><stop offset="0" stopColor="#2c9df0" /><stop offset="1" stopColor="#1656b8" /></linearGradient>
        </defs>
      </svg>
      <div className="flex gap-[25px]">
        {apps.map((a) =>
          a.active ? (
            <div key={a.name} className="relative -mx-[9px] flex w-[48px] justify-center">
              <span className="absolute top-[5px] left-[3px] h-[49px] w-[45px] rounded-[5px] border border-[#dadada] bg-[#f6f6f6]" />
              <span className="absolute top-[5px] left-0 h-[49px] w-[44px] rounded-[5px] border border-[#dadada] bg-[#fafafa]" />
              <AppIcon dot="w-[20px] bg-[#0a74d1]">{a.icon}</AppIcon>
            </div>
          ) : (
            <AppIcon key={a.name} dot={a.still ? "w-0" : "w-[8px] bg-[#868686]"}>{a.icon}</AppIcon>
          ),
        )}
      </div>
      <div className="ml-[15px] flex w-[117px] border-x border-[#bcbcbc] pl-[15px]">
        <AppIcon dot="w-[8px] bg-[#868686]">{scroll}</AppIcon>
        <span className="mt-[28px] ml-[29px] flex gap-[4px]">
          <i className="size-[4px] rounded-full bg-[#1b1b1b]" />
          <i className="size-[4px] rounded-full bg-[#1b1b1b]" />
          <i className="size-[4px] rounded-full bg-[#1b1b1b]" />
        </span>
      </div>
      <div className="ml-auto flex items-center pr-6 font-['Noto_Sans',sans-serif] text-[14.300px] tracking-[-0.1px]">
        <svg width="14" height="8" viewBox="0 0 14 8" fill="none" stroke="#1b1b1b" strokeWidth="1.500"><path d="m.7 7.300 6.300-6.300 6.300 6.300" /></svg>
        <svg className="ml-[23px]" width="20" height="15" viewBox="0 0 20 15">
          <path d="M5 14.200Q.8 14 .8 10.500.8 7.500 4 7 5 .8 10.500.8q4.200 0 5.300 4.500 3.500.7 3.500 4.500 0 4.200-4.300 4.400z" fill="#dadada" stroke="#1b1b1b" strokeWidth="1.200" />
          <path d="M4.500 6.500Q6 1.500 10.500 1.500q3.500 0 4.500 4L10 8.500z" fill="#8b8b8b" />
          <path d="M1.500 10.500Q2 7 5 7l4 2 7 4.500H5q-3.500-.5-3.500-3z" fill="#a9a9a9" />
        </svg>
        <span className="ml-[25px] w-[27px]">POL</span>
        <svg className="ml-[23px]" width="20" height="20" viewBox="0 0 20 20" fill="none" stroke="#1b1b1b" strokeWidth="1.300" strokeLinejoin="round">
          <path d="M18 8.500h-4.500L9.300 1H7.200l1.600 7.500H4.500L2.500 6H1l.9 4L1 14h1.500l2-2.500h4.300L7.200 19h2.100l4.200-7.500H18q1.500-.3 1.500-1.500T18 8.500z" />
        </svg>
        <svg className="ml-[10px]" width="20" height="16" viewBox="0 0 20 16" fill="none" stroke="#1b1b1b" strokeWidth="1.300" strokeLinejoin="round">
          <path d="M.7 5.300h3L8 1.500v13l-4.300-3.800h-3z" />
          <path d="M10.500 5.500q1.500 2.500 0 5" />
          <path d="M13 3.500q3 4.500 0 9M15.500 1.500q5 6.500 0 13" stroke="#bdbdbd" />
        </svg>
        <svg className="ml-[10px] overflow-visible" width="20" height="17" viewBox="0 0 20 17">
          <rect x="1" y="3.500" width="16.500" height="12" rx="2.500" fill="none" stroke="#1b1b1b" strokeWidth="1.300" />
          <path d="M18 7.500h1.800v4H18z" fill="#1b1b1b" />
          <path d="M7.500 5.500h8.200v8H3v-2z" fill="#1b1b1b" />
          <path d="M3.700-.5.3 5h2.200L1.500 9.500 6.500 4H4l1.500-4z" fill="#1b1b1b" stroke="#eee" strokeWidth=".6" />
        </svg>
        <div className="w-[93px] pb-[2px] text-right leading-[20px]">
          <p>19:02</p>
          <p>14.01.2025</p>
        </div>
      </div>
    </div>
  );
}

export default function App() {
  return (
    <div className="h-[1080px] w-[1920px] overflow-hidden">
      <TabStrip />
      <Toolbar />
      <Page />
      <Taskbar />
    </div>
  );
}
